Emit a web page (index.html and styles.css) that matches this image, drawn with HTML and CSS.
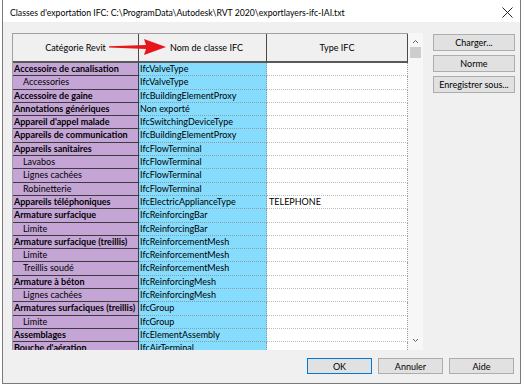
FILE: index.html
```html
<!DOCTYPE html>
<html>
<head>
    <title>Classes d'exportation IFC</title>
    <link rel="stylesheet" href="styles.css">
</head>
<body>

<div class="window">
    <div class="titlebar">
        <span class="title">Classes d'exportation IFC: C:\ProgramData\Autodesk\RVT 2020\exportlayers-ifc-IAI.txt</span>
        <svg class="close" width="11" height="11" viewBox="0 0 11 11">
            <path d="M0.5 0.5 L10.5 10.5 M10.5 0.5 L0.5 10.5" stroke="#222" stroke-width="1" fill="none"/>
        </svg>
    </div>

    <div class="body">
        <div class="grid-frame">
            <div class="grid">
                <div class="row head">
                    <div class="cell c1">Catégorie Revit</div>
                    <div class="cell c2">Nom de classe IFC</div>
                    <div class="cell c3">Type IFC</div>
                </div>

                <div class="row"><div class="cell c1 parent">Accessoire de canalisation</div><div class="cell c2">IfcValveType</div><div class="cell c3"></div></div>
                <div class="row"><div class="cell c1 child">Accessories</div><div class="cell c2">IfcValveType</div><div class="cell c3"></div></div>
                <div class="row"><div class="cell c1 parent">Accessoire de gaine</div><div class="cell c2">IfcBuildingElementProxy</div><div class="cell c3"></div></div>
                <div class="row"><div class="cell c1 parent">Annotations génériques</div><div class="cell c2">Non exporté</div><div class="cell c3"></div></div>
                <div class="row"><div class="cell c1 parent">Appareil d'appel malade</div><div class="cell c2">IfcSwitchingDeviceType</div><div class="cell c3"></div></div>
                <div class="row"><div class="cell c1 parent">Appareils de communication</div><div class="cell c2">IfcBuildingElementProxy</div><div class="cell c3"></div></div>
                <div class="row"><div class="cell c1 parent">Appareils sanitaires</div><div class="cell c2">IfcFlowTerminal</div><div class="cell c3"></div></div>
                <div class="row"><div class="cell c1 child">Lavabos</div><div class="cell c2">IfcFlowTerminal</div><div class="cell c3"></div></div>
                <div class="row"><div class="cell c1 child">Lignes cachées</div><div class="cell c2">IfcFlowTerminal</div><div class="cell c3"></div></div>
                <div class="row"><div class="cell c1 child">Robinetterie</div><div class="cell c2">IfcFlowTerminal</div><div class="cell c3"></div></div>
                <div class="row"><div class="cell c1 parent">Appareils téléphoniques</div><div class="cell c2">IfcElectricApplianceType</div><div class="cell c3">TELEPHONE</div></div>
                <div class="row"><div class="cell c1 parent">Armature surfacique</div><div class="cell c2">IfcReinforcingBar</div><div class="cell c3"></div></div>
                <div class="row"><div class="cell c1 child">Limite</div><div class="cell c2">IfcReinforcingBar</div><div class="cell c3"></div></div>
                <div class="row"><div class="cell c1 parent">Armature surfacique (treillis)</div><div class="cell c2">IfcReinforcementMesh</div><div class="cell c3"></div></div>
                <div class="row"><div class="cell c1 child">Limite</div><div class="cell c2">IfcReinforcementMesh</div><div class="cell c3"></div></div>
                <div class="row"><div class="cell c1 child">Treillis soudé</div><div class="cell c2">IfcReinforcementMesh</div><div class="cell c3"></div></div>
                <div class="row"><div class="cell c1 parent">Armature à béton</div><div class="cell c2">IfcReinforcingMesh</div><div class="cell c3"></div></div>
                <div class="row"><div class="cell c1 child">Lignes cachées</div><div class="cell c2">IfcReinforcingMesh</div><div class="cell c3"></div></div>
                <div class="row"><div class="cell c1 parent">Armatures surfaciques (treillis)</div><div class="cell c2">IfcGroup</div><div class="cell c3"></div></div>
                <div class="row"><div class="cell c1 child">Limite</div><div class="cell c2">IfcGroup</div><div class="cell c3"></div></div>
                <div class="row"><div class="cell c1 parent">Assemblages</div><div class="cell c2">IfcElementAssembly</div><div class="cell c3"></div></div>
                <div class="row"><div class="cell c1 parent">Bouche d'aération</div><div class="cell c2">IfcAirTerminal</div><div class="cell c3"></div></div>
            </div>

            <div class="vscroll">
                <svg class="scroll-arrow" width="15" height="13" viewBox="0 0 15 13">
                    <path d="M5 8 L7.5 5.5 L10 8" stroke="#606060" stroke-width="1" fill="none"/>
                </svg>
                <div class="thumb"></div>
                <div class="track"></div>
                <svg class="scroll-arrow" width="15" height="13" viewBox="0 0 15 13">
                    <path d="M5 5 L7.5 7.5 L10 5" stroke="#606060" stroke-width="1" fill="none"/>
                </svg>
            </div>

            <!-- red annotation arrow drawn over the header -->
            <svg class="arrow" width="58" height="18" viewBox="0 0 58 18">
                <path d="M0 8.2 L37 7 L35 1 L57 9 L35 17 L37 11 L0 9.6 Z" fill="#e8151c"/>
            </svg>
        </div>

        <div class="side-buttons">
            <button class="btn">Charger...</button>
            <button class="btn">Norme</button>
            <button class="btn">Enregistrer sous...</button>
        </div>

        <div class="bottom-buttons">
            <button class="btn default">OK</button>
            <button class="btn">Annuler</button>
            <button class="btn">Aide</button>
        </div>
    </div>
</div>

</body>
</html>
```

FILE: styles.css
```css
body {
    margin: 0;
    background: #ffffff;
    font-family: Lato, "Noto Sans", sans-serif;
    font-size: 9px;
    color: #000;
}

.window {
    margin-left: 2px;
    width: 519px;
    height: 384px;
    box-sizing: border-box;
    border: 1px solid #7a7a7a;
    border-top: none;
    display: flex;
    flex-direction: column;
    background: #f0f0f0;
}

/*---------Title bar-------------*/
.titlebar {
    height: 22px;
    flex-shrink: 0;
    background: #ffffff;
    display: flex;
    align-items: center;
    padding: 0 7px 0 7px;
}
.title {
    flex-grow: 1;
    font-size: 8.7px;
    padding-top: 2px;
}
.close { margin-top: 3px; }

/*---------Body-------------*/
.body {
    flex-grow: 1;
    display: grid;
    grid-template-columns: 411px 82px;
    grid-template-rows: 317px auto;
    column-gap: 10px;
    padding: 11px 5px 0 9px;
}

.grid-frame {
    position: relative;
    display: flex;
    background: #ffffff;
    overflow: hidden;
}

.grid {
    width: 396px;
    box-sizing: border-box;
    border-top: 1px solid #a0a0a0;
    border-left: 1px solid #a0a0a0;
    overflow: hidden;
}

.row {
    display: flex;
    height: 13.3px;
}
.cell {
    box-sizing: border-box;
    height: 100%;
    line-height: 12.5px;
    white-space: nowrap;
    overflow: hidden;
}
.c1 { width: 126px; }
.c2 { width: 128px; }
.c3 { width: 141px; }

.row .c1 {
    background: #c4a5d6;
    border-right: 1px solid #3d3d3d;
    border-bottom: 1px solid #3d3d3d;
    padding-left: 1px;
}
.row .c1.child { padding-left: 10px; }
.row .c1.parent { font-weight: bold; }

.row .c2 {
    background: #86dcfc;
    border-right: 1px dotted #8a9ea8;
    border-bottom: 1px dotted #8a9ea8;
    padding-left: 1px;
}
.row .c3 {
    background: #ffffff;
    border-right: 1px dotted #999;
    border-bottom: 1px dotted #bdbdbd;
    padding-left: 2px;
}

.row.head { height: 29px; }
.row.head .cell {
    background: #f0f0f0;
    border-right: 1px solid #4a4a4a;
    border-bottom: 2px solid #5a5a5a;
    font-weight: normal;
    display: flex;
    align-items: center;
    justify-content: center;
    line-height: normal;
    padding: 0;
}
.row.head .c2 { padding-left: 8px; }

/*---------Scrollbar-------------*/
.vscroll {
    width: 15px;
    display: flex;
    flex-direction: column;
    align-items: center;
    background: #f7f7f7;
}
.scroll-arrow { flex-shrink: 0; margin-top: 2px; }
.thumb {
    width: 11px;
    height: 11px;
    background: #cdcdcd;
    margin-top: -1px;
}
.track { flex-grow: 1; }
.vscroll .scroll-arrow:last-child { margin: 0 0 3px 0; }

.arrow {
    position: absolute;
    left: 97px;
    top: 5px;
}

/*---------Buttons-------------*/
.btn {
    font-family: inherit;
    font-size: 9px;
    background: #e1e1e1;
    border: 1px solid #adadad;
    border-radius: 0;
    padding: 0;
    color: #000;
    height: 17px;
}

.side-buttons {
    display: flex;
    flex-direction: column;
    gap: 4px;
    padding-top: 1px;
}

.bottom-buttons {
    grid-column: 1 / 3;
    display: flex;
    justify-content: flex-end;
    gap: 6px;
    margin-top: 8px;
    padding-right: 1px;
}
.bottom-buttons .btn {
    width: 65px;
    height: 16px;
}
.btn.default { border-color: #0078d7; }
```
